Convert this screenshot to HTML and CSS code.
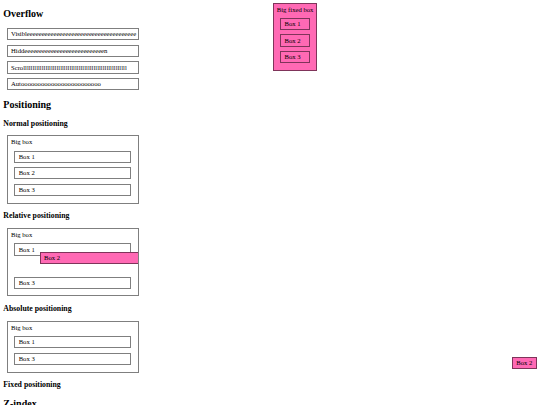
FILE: index.html
```html
<!DOCTYPE html>
<html>
<head>
<meta charset="utf-8">
<title>CSS positioning</title>
<link rel="stylesheet" href="styles.css">
</head>
<body>
<h2>Overflow</h2>
<div class="box of of-visible">Visibleeeeeeeeeeeeeeeeeeeeeeeeeeeeeeeeeeeee</div>
<div class="box of of-hidden">Hiddeeeeeeeeeeeeeeeeeeeeeeeeeeen</div>
<div class="box of of-scroll">Scrollllllllllllllllllllllllllllllllllllllllllllllllllllllll</div>
<div class="box of of-auto">Autoooooooooooooooooooooooo</div>

<h2>Positioning</h2>
<h3>Normal positioning</h3>
<div class="big">
  Big box
  <div class="box">Box 1</div>
  <div class="box">Box 2</div>
  <div class="box">Box 3</div>
</div>

<h3>Relative positioning</h3>
<div class="big clip">
  Big box
  <div class="box">Box 1</div>
  <div class="box pink rel">Box 2</div>
  <div class="box">Box 3</div>
</div>

<h3>Absolute positioning</h3>
<div class="big">
  Big box
  <div class="box">Box 1</div>
  <div class="box pink abs">Box 2</div>
  <div class="box">Box 3</div>
</div>

<h3>Fixed positioning</h3>
<div class="big fixed pink">
  Big fixed box
  <div class="box">Box 1</div>
  <div class="box">Box 2</div>
  <div class="box">Box 3</div>
</div>

<h2>Z-index</h2>
</body>
</html>
```
FILE: styles.css
```css
html {
  background: #fff;
}
body {
  margin: 0 3.33px 3.33px;
  font-family: "Liberation Serif", "Times New Roman", serif;
  font-size: 6.67px;
  line-height: 7.67px;
  color: #000;
}
h2 {
  font-size: 10px;
  line-height: 11.5px;
  font-weight: bold;
  margin: 8.33px 0;
}
h3 {
  font-size: 7.8px;
  line-height: 9px;
  font-weight: bold;
  margin: 7.8px 0;
}
.box {
  border: 1px solid rgba(0, 0, 0, 0.5);
  padding: 1.3px 3.33px;
  margin: 4.4px 3.33px;
  white-space: nowrap;
}
.of {
  box-sizing: border-box;
  width: 132.6px;
}
.of-hidden,
.of-scroll,
.of-auto {
  overflow: hidden;
}
.big {
  box-sizing: border-box;
  width: 132px;
  margin: 0 3.33px;
  padding: 2.1px 3.33px;
  border: 1px solid rgba(0, 0, 0, 0.5);
}
.clip {
  overflow: hidden;
}
.pink {
  background: #ff69b4;
}
.rel {
  position: relative;
  top: -8.33px;
  left: 25.3px;
}
.abs {
  position: absolute;
  right: 0;
}
.fixed {
  position: fixed;
  top: 0;
  left: 50%;
  width: auto;
  margin: 2.5px 3.33px;
  padding: 2.1px 2.5px;
  white-space: nowrap;
}
```
